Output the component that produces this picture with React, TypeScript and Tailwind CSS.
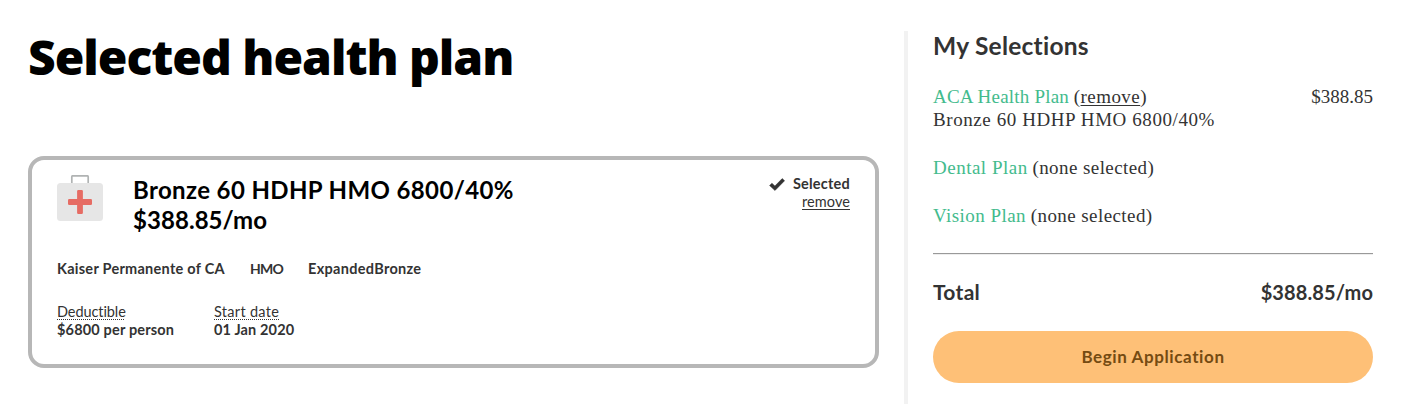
function MedicalKitIcon() {
  return (
    <svg width="46" height="46" viewBox="0 0 46 46" className="block shrink-0">
      <path d="M14.8 9V1.8a1 1 0 0 1 1-1h14.4a1 1 0 0 1 1 1V9" fill="none" stroke="#b0b3b3" strokeWidth="1.7" />
      <rect x="0" y="8" width="46" height="38" rx="3.5" fill="#e6e6e6" />
      <rect x="20.1" y="15" width="5.8" height="24" rx="1.2" fill="#e66c64" />
      <rect x="11" y="24.1" width="24" height="5.8" rx="1.2" fill="#e66c64" />
    </svg>
  );
}

function CheckIcon() {
  return (
    <svg width="16" height="13" viewBox="0 0 16 13" className="block shrink-0">
      <path d="M0.6 7.6L2.9 5.2L5.9 8L13.2 0.6L15.6 2.7L6 12.5Z" fill="#333" stroke="#333" strokeWidth="0.5" strokeLinejoin="round" />
    </svg>
  );
}

export default function App() {
  return (
    <div className="flex h-[404px] w-[1417px] items-start overflow-hidden bg-white font-['Lato',sans-serif] text-[#333]">
      <main className="ml-7 w-[851px] pt-[27px]">
        <h1 className="h-[60px] whitespace-nowrap font-['Open_Sans',sans-serif] text-[48px] leading-[60px] font-extrabold tracking-[-1.03px] text-black">
          Selected health plan
        </h1>
        <section className="mt-[69px] h-[212px] rounded-2xl border-4 border-[#b7b7b7] px-[25px] pt-[15px]">
          <div className="flex items-start">
            <MedicalKitIcon />
            <h2 className="ml-[30px] flex-1 text-[24px] leading-[30px] font-bold text-black">
              <span className="block tracking-[0.38px]">Bronze 60 HDHP HMO 6800/40%</span>
              <span className="block tracking-[0.05px]">$388.85/mo</span>
            </h2>
            <div className="flex flex-col items-end text-[14.5px] leading-[18px]">
              <div className="flex items-center gap-2">
                <CheckIcon />
                <span className="font-bold tracking-[0.22px]">Selected</span>
              </div>
              <a className="tracking-[0.08px] underline underline-offset-2">remove</a>
            </div>
          </div>
          <div className="mt-[25px] flex text-[14.5px] leading-[18px] font-bold">
            <span className="w-[193px] tracking-[0.26px]">Kaiser Permanente of CA</span>
            <span className="w-[58px] text-[14px] tracking-[-0.7px]">HMO</span>
            <span className="tracking-[0.3px]">ExpandedBronze</span>
          </div>
          <dl className="mt-[25px] flex text-[14.5px] leading-[18px]">
            <div className="w-[157px]">
              <dt className="tracking-[-0.08px] underline decoration-dotted decoration-1 underline-offset-2">Deductible</dt>
              <dd className="font-bold tracking-[0.17px]">$6800 per person</dd>
            </div>
            <div>
              <dt className="tracking-[0.3px] underline decoration-dotted decoration-1 underline-offset-2">Start date</dt>
              <dd className="font-bold tracking-[0.15px]">01 Jan 2020</dd>
            </div>
          </dl>
        </section>
      </main>
      <aside className="mt-[31px] ml-[25px] h-[373px] w-[469px] border-l-4 border-[#f2f2f2] pl-[25px]">
        <h2 className="text-[24.5px] leading-[30px] font-bold tracking-[0.25px]">My Selections</h2>
        <div className="mt-6 flex flex-col gap-[25px] font-['Liberation_Serif',serif] text-[19px] leading-[23px]">
          <div>
            <div className="flex justify-between">
              <p>
                <span className="tracking-[0.2px] text-[#43bb8d]">ACA Health Plan</span>{" "}
                <span className="tracking-[0.45px]">
                  (<a className="underline decoration-1 underline-offset-2">remove</a>)
                </span>
              </p>
              <span>$388.85</span>
            </div>
            <p className="tracking-[0.58px]">Bronze 60 HDHP HMO 6800/40%</p>
          </div>
          <p>
            <span className="tracking-[0.5px] text-[#43bb8d]">Dental Plan</span>{" "}
            <span className="tracking-[0.42px]">(none selected)</span>
          </p>
          <p>
            <span className="tracking-[0.45px] text-[#43bb8d]">Vision Plan</span>{" "}
            <span className="tracking-[0.42px]">(none selected)</span>
          </p>
        </div>
        <hr className="mt-[26px] h-[2px] border-t border-b border-t-[#999] border-b-[#eee]" />
        <div className="mt-[25px] flex justify-between text-[20px] leading-6 font-bold">
          <span className="text-[21px] tracking-[0.3px]">Total</span>
          <span className="tracking-[0.1px]">$388.85/mo</span>
        </div>
        <button className="mt-[27px] block h-[52px] w-full rounded-full bg-[#fec077] text-[17px] font-bold tracking-[0.6px] text-[#754b12]">
          Begin Application
        </button>
      </aside>
    </div>
  );
}
